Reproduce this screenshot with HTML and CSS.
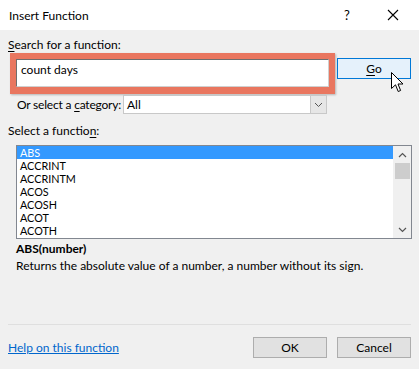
FILE: index.html
```html
<!DOCTYPE html>
<html lang="en">
  <head>
    <meta charset="UTF-8" />
    <title>Insert Function</title>
    <link rel="stylesheet" href="styles.css">
  </head>
  <body>
    <div class="dialog">
      <!-- Title bar -->
      <div class="titlebar">
        <span class="title">Insert Function</span>
        <span class="help-btn">?</span>
        <span class="close-btn">
          <svg width="12" height="12" viewBox="0 0 12 12">
            <path d="M1 1 L11 11 M11 1 L1 11" stroke="#000" stroke-width="1.1" fill="none" />
          </svg>
        </span>
      </div>

      <div class="content">
        <div class="label"><u>S</u>earch for a function:</div>
        <div class="search-row">
          <div class="search-box">
            <div class="search-input">count days</div>
          </div>
          <div class="btn btn-go"><u>G</u>o</div>
        </div>

        <div class="category-row">
          <span class="category-label">Or select a <u>c</u>ategory:</span>
          <div class="select">
            <span class="select-value">All</span>
            <span class="select-arrow">
              <svg width="9" height="6" viewBox="0 0 9 6">
                <path d="M1 1 L4.5 4.5 L8 1" stroke="#555" stroke-width="1" fill="none" />
              </svg>
            </span>
          </div>
        </div>

        <div class="label label-list">Select a functio<u>n</u>:</div>
        <div class="listbox">
          <ul class="items">
            <li class="selected">ABS</li>
            <li>ACCRINT</li>
            <li>ACCRINTM</li>
            <li>ACOS</li>
            <li>ACOSH</li>
            <li>ACOT</li>
            <li>ACOTH</li>
          </ul>
          <div class="scrollbar">
            <svg class="scroll-arrow" width="9" height="6" viewBox="0 0 9 6">
              <path d="M1 5 L4.5 1.5 L8 5" stroke="#555" stroke-width="1.2" fill="none" />
            </svg>
            <div class="thumb"></div>
            <svg class="scroll-arrow" width="9" height="6" viewBox="0 0 9 6">
              <path d="M1 1 L4.5 4.5 L8 1" stroke="#555" stroke-width="1.2" fill="none" />
            </svg>
          </div>
        </div>

        <div class="signature">ABS(number)</div>
        <p class="desc">Returns the absolute value of a number, a number without its sign.</p>
      </div>

      <div class="footer">
        <a class="help-link" href="#">Help on this function</a>
        <div class="buttons">
          <div class="btn">OK</div>
          <div class="btn">Cancel</div>
        </div>
      </div>

      <!-- mouse pointer over the Go button -->
      <svg class="cursor" width="13" height="21" viewBox="0 0 13 21">
        <path d="M0.5 0.5 L0.5 16.5 L4.5 12.8 L7.2 19.5 L9.6 18.5 L7 12 L12 12 Z" fill="#fff" stroke="#000" stroke-width="1" />
      </svg>
    </div>
  </body>
</html>
```

FILE: styles.css
```css
body {
  margin: 0;
  background: #f0f0f0;
  font-family: Lato, "Noto Sans", sans-serif;
  font-size: 12px;
  color: #000;
}
.dialog {
  position: relative;
  width: 419px;
  height: 369px;
  overflow: hidden;
}
u {
  text-decoration-thickness: 1px;
  text-underline-offset: 2px;
}

/* Title bar */
.titlebar {
  height: 30px;
  background: #fff;
  display: flex;
  align-items: center;
  padding-left: 9px;
}
.title {
  flex: 1;
}
.help-btn {
  width: 10px;
  margin-right: 33px;
  font-size: 13px;
}
.close-btn {
  display: flex;
  margin-right: 20px;
}

.content {
  padding: 7px 8px 0 8px;
}
.label {
  height: 15px;
  line-height: 15px;
}

/* Search */
.search-row {
  display: flex;
  align-items: flex-start;
  margin-top: 1px;
}
.search-box {
  margin-left: 2px;
  width: 313px;
  height: 28px;
  border: 6px solid #e9765f;
  border-bottom-width: 7px;
  box-shadow: 1px 1px 2px rgba(0, 0, 0, 0.25);
  background: #fff;
}
.search-input {
  height: 100%;
  box-sizing: border-box;
  border: 1px solid #6e6e6e;
  border-right-color: #d0d0d0;
  border-bottom-color: #d0d0d0;
  padding: 3px 4px;
  line-height: 14px;
}
.btn {
  width: 74px;
  height: 21px;
  box-sizing: border-box;
  border: 1px solid #adadad;
  background: #e1e1e1;
  text-align: center;
  line-height: 19px;
}
.btn-go {
  margin-left: 2px;
  margin-top: 5px;
  border-color: #0078d7;
  background: #e5f1fb;
}

/* Category */
.category-row {
  display: flex;
  align-items: center;
  margin-top: 1px;
  padding-left: 9px;
}
.category-label {
  width: 106px;
  white-space: nowrap;
  letter-spacing: -0.2px;
}
.select {
  width: 204px;
  height: 19px;
  box-sizing: border-box;
  border: 1px solid #c8c8c8;
  background: #fff;
  display: flex;
  align-items: center;
}
.select-value {
  flex: 1;
  padding-left: 3px;
}
.select-arrow {
  width: 16px;
  height: 17px;
  box-sizing: border-box;
  border-left: 1px solid #c8c8c8;
  background: #e6e6e6;
  display: flex;
  align-items: center;
  justify-content: center;
}

/* Function list */
.label-list {
  margin-top: 9px;
}
.listbox {
  margin: 7px 0 0 8px;
  width: 396px;
  height: 94px;
  box-sizing: border-box;
  border: 1px solid #828790;
  background: #fff;
  display: flex;
}
.items {
  list-style: none;
  margin: 0;
  padding: 0;
  flex: 1;
}
.items li {
  height: 13px;
  line-height: 13px;
  padding-left: 3px;
  font-size: 10.8px;
}
.items li.selected {
  background: #3399ff;
  color: #fff;
}
.scrollbar {
  width: 18px;
  background: #f0f0f0;
  display: flex;
  flex-direction: column;
  align-items: center;
  padding: 6px 0 5px;
  box-sizing: border-box;
}
.thumb {
  width: 15px;
  height: 16px;
  background: #cdcdcd;
  margin-top: 5px;
  margin-bottom: auto;
}

.signature {
  font-weight: bold;
  margin: 2px 0 0 8px;
  height: 15px;
  line-height: 15px;
}
.desc {
  margin: 2px 0 0 8px;
  line-height: 15px;
}

/* Footer */
.footer {
  position: absolute;
  left: 8px;
  right: 8px;
  bottom: 0;
  height: 44px;
  border-top: 1px solid #dfdfdf;
  display: flex;
  align-items: center;
  justify-content: space-between;
}
.help-link {
  color: #0066cc;
  text-decoration: underline;
  margin-top: 1px;
}
.buttons {
  display: flex;
  gap: 10px;
  margin-top: 1px;
}

.cursor {
  position: absolute;
  left: 391px;
  top: 72px;
}
```
